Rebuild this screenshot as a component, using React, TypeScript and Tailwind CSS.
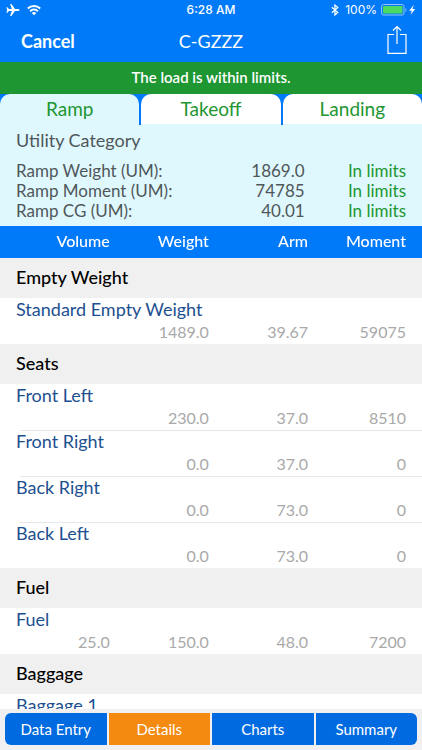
import { useState } from "react";

type Item = { name: string; volume?: string; weight?: string; arm?: string; moment?: string };
type Section = { title: string; items: Item[] };

const sections: Section[] = [
  {
    title: "Empty Weight",
    items: [{ name: "Standard Empty Weight", weight: "1489.0", arm: "39.67", moment: "59075" }],
  },
  {
    title: "Seats",
    items: [
      { name: "Front Left", weight: "230.0", arm: "37.0", moment: "8510" },
      { name: "Front Right", weight: "0.0", arm: "37.0", moment: "0" },
      { name: "Back Right", weight: "0.0", arm: "73.0", moment: "0" },
      { name: "Back Left", weight: "0.0", arm: "73.0", moment: "0" },
    ],
  },
  {
    title: "Fuel",
    items: [{ name: "Fuel", volume: "25.0", weight: "150.0", arm: "48.0", moment: "7200" }],
  },
  { title: "Baggage", items: [{ name: "Baggage 1" }] },
];

const summary = [
  { label: "Ramp Weight (UM):", value: "1869.0" },
  { label: "Ramp Moment (UM):", value: "74785" },
  { label: "Ramp CG (UM):", value: "40.01" },
];

const phases = ["Ramp", "Takeoff", "Landing"];
const views = ["Data Entry", "Details", "Charts", "Summary"];

function StatusBar() {
  return (
    <div className="grid h-5 grid-cols-3 items-center px-1.5 font-['Inter',sans-serif] text-xs text-white">
      <div className="flex items-center gap-1.5">
        <svg width="14" height="14" viewBox="0 0 14 14" fill="currentColor" aria-label="Airplane mode">
          <path d="M13.600 7c0-.6-.8-.9-1.800-.9H9L5.400 1H4.100l1.700 5.100H2.900L1.400 4.300H.4L1.200 7 .4 9.700h1l1.500-1.800h2.900L4.100 13h1.300L9 7.900h2.800c1 0 1.800-.3 1.800-.9z" />
        </svg>
        <svg width="16" height="12" viewBox="0 0 16 12" fill="none" stroke="currentColor" strokeWidth="2" aria-label="Wi-Fi">
          <path d="M1.800 4.500a9 9 0 0 1 12.400 0" />
          <path d="M4.100 7.200a5.600 5.600 0 0 1 7.800 0" />
          <path d="M8 11.300 5.800 9a3.200 3.200 0 0 1 4.400 0z" fill="currentColor" stroke="none" />
        </svg>
      </div>
      <div className="text-center font-medium">6:28 AM</div>
      <div className="flex items-center justify-end">
        <svg width="8" height="12" viewBox="0 0 8 12" fill="none" stroke="currentColor" strokeWidth="1.200" aria-label="Bluetooth">
          <path d="M.8 3.300 6.800 8.500 3.900 11V1l2.900 2.500L.8 8.700" />
        </svg>
        <span className="ml-1.5">100%</span>
        <svg className="ml-1" width="35" height="12" viewBox="0 0 35 12" aria-label="Battery charging">
          <rect x=".5" y=".5" width="22.500" height="10.500" rx="2" fill="none" stroke="#8fc3f5" />
          <rect x="2" y="2" width="19.500" height="7.500" rx=".8" fill="#4cd964" />
          <path d="M24.500 4v4c1.300-.5 1.300-3.500 0-4z" fill="#8fc3f5" />
          <path d="M32.800.8 28.200 6.800h2.600l-1.400 4.200 4.800-6h-2.700z" fill="#fff" />
        </svg>
      </div>
    </div>
  );
}

export default function App() {
  const [phase, setPhase] = useState("Ramp");
  const [view, setView] = useState("Details");

  return (
    <div className="flex h-screen flex-col bg-white font-['Lato',sans-serif]">
      <header className="bg-[#007af8]">
        <StatusBar />
        <div className="grid h-[42px] grid-cols-3 items-center px-[15px] text-white">
          <button className="justify-self-start px-1.5 text-lg font-bold">Cancel</button>
          <h1 className="text-center text-lg">C-GZZZ</h1>
          <button className="justify-self-end" aria-label="Share">
            <svg width="20" height="38" viewBox="0 0 20 38" fill="none" stroke="currentColor" strokeWidth="1.200">
              <path d="M7 12.500H1v18.900h18V12.500h-6M10 22V4.500M6 8.500l4-4 4 4" />
            </svg>
          </button>
        </div>
        <p className="h-8 bg-[#1e9632] text-center text-[15px] leading-[30px] font-semibold text-white">
          The load is within limits.
        </p>
        <div className="grid grid-cols-3 gap-0.5" role="tablist">
          {phases.map((name) => (
            <button
              key={name}
              role="tab"
              aria-selected={phase === name}
              onClick={() => setPhase(name)}
              className={`h-[31px] rounded-t-[10px] border-b border-[#dff8fe] text-[19px] leading-7 text-[#1e9632] ${
                phase === name ? "bg-[#dff8fe]" : "bg-white"
              }`}
            >
              {name}
            </button>
          ))}
        </div>
      </header>

      <section className="bg-[#dff8fe] px-4 pt-[3px] pb-[5px] text-[#4f5759]">
        <h2 className="text-lg leading-6">Utility Category</h2>
        <table className="mt-[9px] w-full">
          <tbody>
            {summary.map((row) => (
              <tr key={row.label} className="h-5 text-[17px] leading-5">
                <th scope="row" className="w-1/2 p-0 text-left font-normal">{row.label}</th>
                <td className="p-0 text-right">{row.value}</td>
                <td className="w-[26%] p-0 text-right text-[#1e9632]">In limits</td>
              </tr>
            ))}
          </tbody>
        </table>
      </section>

      <main className="min-h-0 flex-1 overflow-y-auto [scrollbar-width:none]">
        <table className="w-full table-fixed">
          <thead className="sticky top-0 bg-[#007af8] text-base leading-5 text-white">
            <tr className="h-8">
              <th scope="col" className="w-[26%] px-0 pt-0 pb-0.5 text-right font-medium">Volume</th>
              <th scope="col" className="px-0 pt-0 pb-0.5 text-right font-medium">Weight</th>
              <th scope="col" className="px-0 pt-0 pb-0.5 text-right font-medium">Arm</th>
              <th scope="col" className="w-[27%] pt-0 pr-4 pb-0.5 text-right font-medium">Moment</th>
            </tr>
          </thead>
          {sections.map((section) => (
            <tbody key={section.title}>
              <tr className="h-10 bg-[#f0f0f0]">
                <th colSpan={4} scope="colgroup" className="px-4 pt-0 pb-0.5 text-left text-lg font-medium text-black">
                  {section.title}
                </th>
              </tr>
              {section.items.map((item, i) => [
                <tr key={item.name} className="h-[22px]">
                  <th colSpan={4} className="p-0 text-left text-lg leading-5 font-normal text-[#1d5090]">
                    <div className={`ml-5 h-px ${i > 0 ? "bg-[#e4e7ec]" : ""}`} />
                    <div className="px-4 pb-px">{item.name}</div>
                  </th>
                </tr>,
                <tr key={`${item.name} values`} className="h-6 text-base leading-6 text-[#a9a9a9]">
                  <td className="p-0 text-right">{item.volume}</td>
                  <td className="p-0 text-right">{item.weight}</td>
                  <td className="p-0 text-right">{item.arm}</td>
                  <td className="py-0 pr-4 text-right">{item.moment}</td>
                </tr>,
              ])}
            </tbody>
          ))}
        </table>
      </main>

      <nav className="grid grid-cols-4 gap-0.5 bg-[#f0f0f2] px-[5px] pt-1 pb-[5px]">
        {views.map((name) => (
          <button
            key={name}
            onClick={() => setView(name)}
            className={`h-8 text-[15px] leading-8 text-white first:rounded-l-md last:rounded-r-md ${
              view === name ? "bg-[#f58a10]" : "bg-[#006be0]"
            }`}
          >
            {name}
          </button>
        ))}
      </nav>
    </div>
  );
}
